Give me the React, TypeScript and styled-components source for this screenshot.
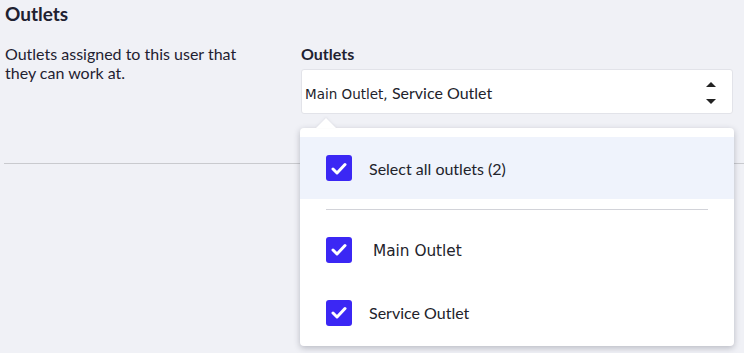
import { FC } from "react";
import styled, { createGlobalStyle } from "styled-components";

const Global = createGlobalStyle`
    body {
        margin: 0;
        background: #f0f1f6;
        font-family: Lato, "Liberation Sans", sans-serif;
        color: #1f2131;
    }
`;

const Page = styled.div`
    width: 744px;
    height: 353px;
    overflow: hidden;
    padding-left: 5px;
    box-sizing: border-box;
`;

const Title = styled.h2`
    margin: 0;
    padding-top: 3px;
    font-size: 19px;
    font-weight: 700;
    line-height: 22px;
`;

const Row = styled.div`
    display: grid;
    grid-template-columns: 296px 432px;
    margin-top: 19px;
`;

const Description = styled.p`
    margin: 0;
    width: 252px;
    font-size: 16px;
    line-height: 19px;
`;

const Field = styled.div`
    display: flex;
    flex-direction: column;
`;

const Label = styled.label`
    font-size: 16px;
    font-weight: 700;
    line-height: 19px;
    margin-bottom: 6px;
`;

const SelectWrap = styled.div`
    position: relative;
`;

const SelectBox = styled.div`
    height: 45px;
    box-sizing: border-box;
    background: #fff;
    border: 1px solid #e2e3e9;
    border-radius: 3px;
    display: flex;
    align-items: center;
    justify-content: space-between;
    padding: 2px 16px 0 3px;
`;

const Value = styled.span`
    font-size: 16px;
    color: #22232b;
`;

const Small = styled.span`
    font-family: "DejaVu Sans", sans-serif;
    font-size: 13.5px;
    color: #22232b;
`;

const Arrows = styled.div`
    display: flex;
    flex-direction: column;
    gap: 12px;
`;

const Menu = styled.div`
    position: absolute;
    top: 59px;
    left: -1px;
    right: -1px;
    background: #fff;
    border-radius: 4px;
    box-shadow: 0 2px 6px rgba(40, 42, 60, 0.28);
    padding: 9px 0 2px;
    z-index: 2;

    &::before {
        content: "";
        position: absolute;
        top: -10px;
        left: 16px;
        border-left: 10px solid transparent;
        border-right: 10px solid transparent;
        border-bottom: 10px solid #fff;
        filter: drop-shadow(0 -1px 1px rgba(40, 42, 60, 0.08));
    }
`;

const Option = styled.div<{ $active?: boolean; $indent?: number }>`
    height: ${(p) => (p.$active ? 62 : 63)}px;
    display: flex;
    align-items: center;
    gap: ${(p) => 17 + (p.$indent ?? 0)}px;
    padding-left: 26px;
    background: ${(p) => (p.$active ? "#eff3fc" : "transparent")};
    font-size: 16px;
    color: #22232b;
`;

const OptionText = styled.span<{ $wide?: boolean }>`
    font-family: ${(p) => (p.$wide ? `"DejaVu Sans", sans-serif` : `Lato, sans-serif`)};
    font-size: ${(p) => (p.$wide ? "15.3px" : "16px")};
    margin-top: ${(p) => (p.$wide ? "3px" : "0")};
`;

const Check = styled.span`
    width: 26px;
    height: 26px;
    flex: none;
    border-radius: 3px;
    background: #3b27f4;
    display: flex;
    align-items: center;
    justify-content: center;
`;

const MenuDivider = styled.div`
    height: 1px;
    background: #d2d3d9;
    margin: 10px 26px 8px;
`;

const Rule = styled.div`
    height: 1px;
    background: #c9cace;
    margin-top: 49px;
    margin-left: -1px;
`;

const CheckMark: FC = () => (
    <svg width="16" height="13" viewBox="0 0 16 13">
        <path d="M2 7 L6 11 L14 2.5" fill="none" stroke="#fff" strokeWidth="3" strokeLinecap="round" strokeLinejoin="round" />
    </svg>
);

const Box: FC = () => (
    <Check>
        <CheckMark />
    </Check>
);

export default function App() {
    return (
        <Page>
            <Global />
            <Title>Outlets</Title>
            <Row>
                <Description>Outlets assigned to this user that they can work at.</Description>
                <Field>
                    <Label>Outlets</Label>
                    <SelectWrap>
                        <SelectBox>
                            <span>
                                <Small>Main Outlet, </Small>
                                <Value>Service Outlet</Value>
                            </span>
                            <Arrows>
                                <svg width="10" height="5" viewBox="0 0 10 5">
                                    <path d="M0 5 L5 0 L10 5 Z" fill="#222" />
                                </svg>
                                <svg width="10" height="5" viewBox="0 0 10 5">
                                    <path d="M0 0 L10 0 L5 5 Z" fill="#222" />
                                </svg>
                            </Arrows>
                        </SelectBox>
                        <Menu>
                            <Option $active>
                                <Box />
                                <OptionText>Select all outlets (2)</OptionText>
                            </Option>
                            <MenuDivider />
                            <Option $indent={4}>
                                <Box />
                                <OptionText $wide>Main Outlet</OptionText>
                            </Option>
                            <Option>
                                <Box />
                                <OptionText>Service Outlet</OptionText>
                            </Option>
                        </Menu>
                    </SelectWrap>
                </Field>
            </Row>
            <Rule />
        </Page>
    );
}
